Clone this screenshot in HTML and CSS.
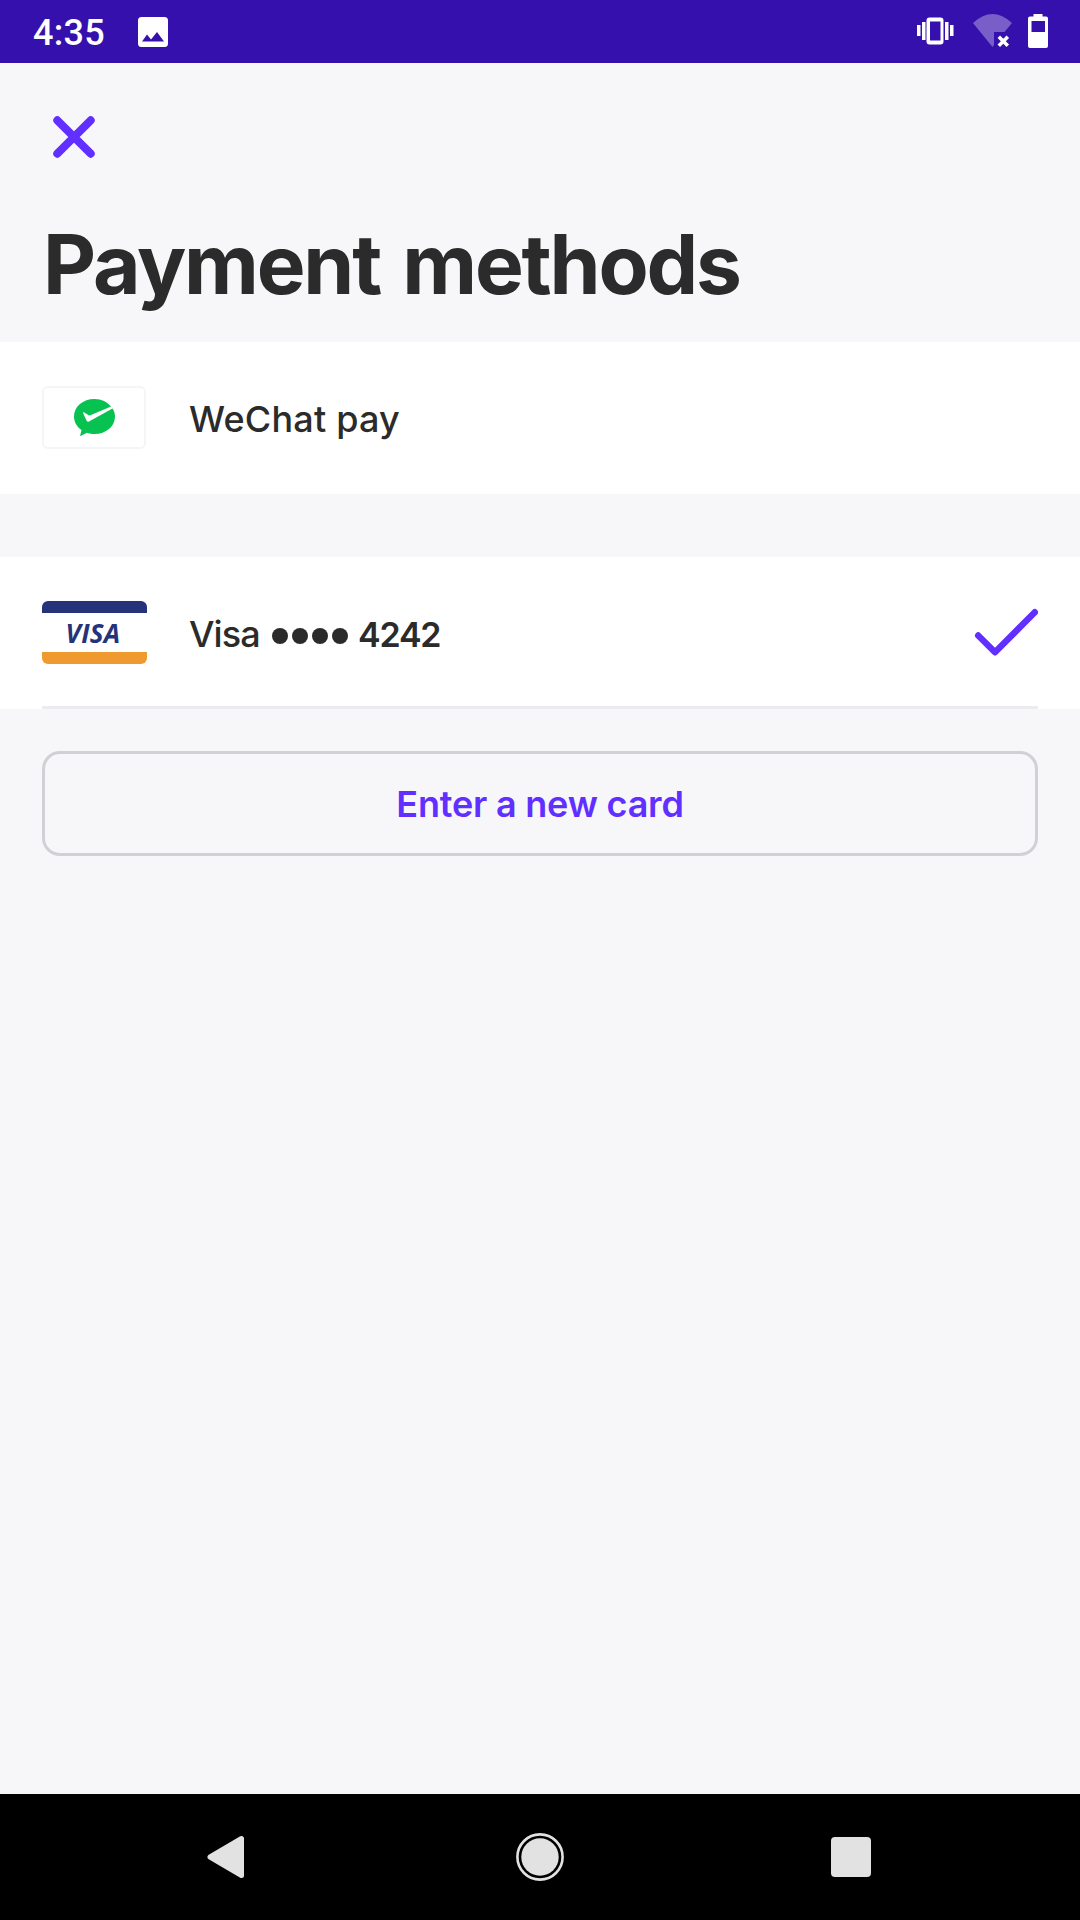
FILE: index.html
```html
<!DOCTYPE html>
<html lang="en">
<head>
<meta charset="utf-8">
<title>Payment methods</title>
<link rel="stylesheet" href="styles.css">
</head>
<body>
<div class="screen">
  <header class="status">
    <span class="time">4:35</span>
    <svg class="picture" width="30" height="30" viewBox="0 0 30 30"><path fill="#fff" fill-rule="evenodd" d="M3.500 0h23A3.500 3.500 0 0 1 30 3.500v23a3.500 3.500 0 0 1-3.500 3.500h-23A3.500 3.500 0 0 1 0 26.500v-23A3.500 3.500 0 0 1 3.500 0zM4 24.500h22L19 15l-6 7.500L9 17.500z"/></svg>
    <svg class="system" width="132" height="34" viewBox="916 14 132 34">
      <g fill="#fff">
        <path d="M917 25h3.500v11H917zM922 22h3.500v18H922zM945 22h3.500v18H945zM950 25h3.500v11H950z"/>
        <path fill-rule="evenodd" d="M929.500 17.500h11a3 3 0 0 1 3 3v21a3 3 0 0 1-3 3h-11a3 3 0 0 1-3-3v-21a3 3 0 0 1 3-3zM930 21.500v19h10.500v-19z"/>
        <path opacity=".33" d="M973 23Q992.500 5 1012 23L1004.500 32H994v13l-1.500 2z"/>
        <path d="M1033.500 16.500V14h9v2.500h3.500a2 2 0 0 1 2 2V46a2 2 0 0 1-2 2h-16a2 2 0 0 1-2-2V18.500a2 2 0 0 1 2-2zM1031.500 21v11h13.500V21z" fill-rule="evenodd"/>
      </g>
      <path stroke="#fff" stroke-width="3.500" d="M998.800 36.800l9 9m0-9l-9 9"/>
    </svg>
  </header>
  <main class="content">
    <svg class="close" width="42" height="42" viewBox="0 0 42 42"><path d="M4.300 4.300l33.400 33.400m0-33.400L4.300 37.700" stroke="#612fff" stroke-width="8" stroke-linecap="round"/></svg>
    <h1 class="title">Payment methods</h1>
    <section class="row">
      <div class="card wechat">
        <svg width="42" height="38" viewBox="0 0 42 38"><path fill="#07c151" d="M20.500 0C9 0 0 7.500 0 17.500 0 23 3 28 7.500 31L6 37.200 13 33.800C16 35 18 35 20.500 35 32 35 41 27.500 41 17.500 41 14.500 40 11.500 38.500 9.500L15 22.500Q13.500 23.500 12.500 21.500L9 14 9.500 13 13.500 15.500Q15 17 17 16L37 7.500C33.500 3 27.500 0 20.500 0z"/></svg>
      </div>
      <span class="label wechat-label">WeChat pay</span>
    </section>
    <section class="row selected">
      <div class="card visa"><span class="brand">VISA</span></div>
      <span class="label visa-label">Visa</span>
      <span class="dots"><i class="dot"></i><i class="dot"></i><i class="dot"></i><i class="dot"></i></span>
      <span class="label digits">4242</span>
      <svg class="check" width="64" height="48" viewBox="0 0 64 48"><path d="M4.200 27.500l16.800 16.800L60.800 4.200" fill="none" stroke="#612fff" stroke-width="6.400" stroke-linecap="round" stroke-linejoin="round"/></svg>
    </section>
    <button class="add">Enter a new card</button>
  </main>
  <nav class="nav">
    <svg width="38" height="44" viewBox="0 0 38 44"><path fill="#e2e2e2" stroke="#e2e2e2" stroke-width="5" stroke-linejoin="round" d="M3 22L34.500 3.500v37z"/></svg>
    <svg class="home" width="48" height="48" viewBox="0 0 48 48"><circle cx="24" cy="24" r="22.600" fill="none" stroke="#e2e2e2" stroke-width="2.600"/><circle cx="24" cy="24" r="18.700" fill="#e2e2e2"/></svg>
    <i class="recent"></i>
  </nav>
</div>
</body>
</html>
```
FILE: styles.css
```css
* { box-sizing: border-box; }
body { margin: 0; }
.screen {
  width: 1080px;
  height: 1920px;
  display: flex;
  flex-direction: column;
  background: #f7f7fa;
  font-family: Inter, "Liberation Sans", sans-serif;
  color: #2b2b2b;
}
.status {
  height: 63px;
  padding: 0 32px 0 33px;
  background: #3610ad;
  display: flex;
  align-items: center;
}
.time {
  width: 105px;
  color: #fff;
  font: 500 36px/63px Roboto, sans-serif;
  letter-spacing: 0.3px;
  padding-top: 3px;
}
.picture { margin-top: 1px; }
.system {
  margin-left: auto;
  margin-bottom: 1px;
}
.content {
  flex: 1;
  display: flex;
  flex-direction: column;
}
.close { margin: 53px 0 0 53px; }
.title {
  margin: 57px 0 0 43px;
  height: 127px;
  font-size: 82px;
  line-height: 100px;
  font-weight: 700;
  letter-spacing: -2.2px;
  word-spacing: 5px;
  white-space: nowrap;
}
.row {
  height: 152px;
  padding: 0 42px 1px;
  background: #fff;
  display: flex;
  align-items: center;
}
.selected {
  position: relative;
  margin-top: 63px;
}
.selected::after {
  content: "";
  position: absolute;
  left: 42px;
  right: 42px;
  bottom: 0;
  height: 3px;
  background: #ebebf0;
}
.card {
  width: 105px;
  height: 63px;
  border-radius: 6px;
  display: flex;
  align-items: center;
  justify-content: center;
}
.wechat {
  width: 104px;
  padding-left: 2px;
  border: 2px solid #f5f5f5;
}
.visa {
  border-top: 12px solid #26337a;
  border-bottom: 12px solid #ef9a2e;
}
.brand {
  font: italic 700 26px/39px "Open Sans", sans-serif;
  letter-spacing: 0.3px;
  margin: 2px 3px 0 0;
  color: #26337a;
}
.label {
  font-size: 36px;
  line-height: 44px;
  font-weight: 500;
  white-space: nowrap;
}
.wechat-label {
  margin: 3px 0 0 43px;
  letter-spacing: 0.2px;
}
.visa-label {
  margin: 3px 0 0 42px;
  width: 82px;
  letter-spacing: -0.9px;
}
.dots {
  display: flex;
  gap: 4px;
  margin: 6px 0 0 1px;
}
.dot {
  width: 16px;
  height: 16px;
  border-radius: 50%;
  background: #2b2b2b;
}
.digits {
  margin: 4px 0 0 10px;
  font-size: 34px;
  font-weight: 600;
  letter-spacing: -1.200px;
}
.check {
  margin-left: auto;
  margin-bottom: 1px;
}
.add {
  height: 105px;
  margin: 42px 42px 0;
  padding: 1px 0 0;
  border: 3px solid #d0d1d4;
  border-radius: 18px;
  background: none;
  color: #612fff;
  font: 600 36px/44px Inter, sans-serif;
  letter-spacing: -0.2px;
}
.nav {
  height: 126px;
  padding: 0 209px 0 207px;
  background: #000;
  display: flex;
  align-items: center;
  justify-content: space-between;
}
.home { margin-left: 4px; }
.recent {
  width: 40px;
  height: 40px;
  border-radius: 4px;
  background: #e2e2e2;
}
```
